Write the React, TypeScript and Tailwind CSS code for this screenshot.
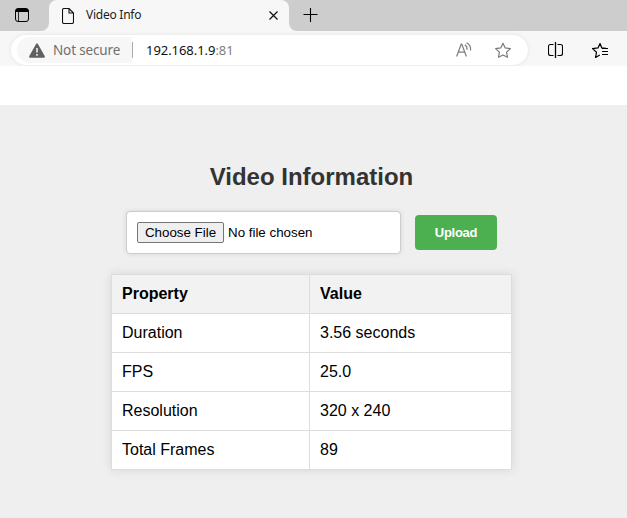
import React from "react";

const rows = [
  ["Duration", "3.56 seconds"],
  ["FPS", "25.0"],
  ["Resolution", "320 x 240"],
  ["Total Frames", "89"],
];

function TabStrip() {
  return (
    <div className="flex h-[31px] bg-[#f7f7f7]">
      <div className="h-[31px] w-[49px] rounded-br-lg bg-[#cdcdcd] pt-[8px] pl-[15px]">
        <svg width="14" height="14" viewBox="0 0 14 14" fill="none" stroke="#000">
          <rect x=".5" y=".5" width="13" height="13" rx="2.5" />
          <path d="M1 1h12v3H1z" fill="#000" stroke="none" />
          <path d="M3.500 4v9" strokeWidth=".8" />
        </svg>
      </div>
      <div className="h-[31px] w-[240px] bg-linear-to-b from-[#cdcdcd] from-50% to-[#f7f7f7] to-50%">
        <div className="flex h-[31px] items-center rounded-t-lg bg-[#f7f7f7] pl-[13px]">
          <svg width="12" height="16" viewBox="0 0 12 16" fill="none" stroke="#111" strokeWidth="1.100">
            <path d="M2 .500h5L11.500 5v9q0 1.500-1.500 1.500H2Q.500 15.500.500 14V2Q.500.500 2 .500zM7 .500V5h4.500" />
          </svg>
          <span className="ml-[12px] w-[183px] pb-[1px] text-[12px] text-[#1b1b1b]">
            <span className="tracking-[-0.25px]">Video Info</span>
          </span>
          <svg width="9" height="9" viewBox="0 0 9 9" stroke="#111" strokeWidth="1.200">
            <path d="M.5 .5l8 8M8.500 .5l-8 8" />
          </svg>
        </div>
      </div>
      <div className="h-[31px] flex-1 rounded-bl-lg bg-[#cdcdcd] pt-[8px] pl-[14px]">
        <svg width="15" height="14" viewBox="0 0 15 14" stroke="#000" strokeWidth="1.100">
          <path d="M.500 6.500h14M7.500 0v14" />
        </svg>
      </div>
    </div>
  );
}

function AddressBar() {
  return (
    <div className="flex h-[35px] overflow-hidden bg-[#f7f7f7] pt-[4px] pl-[11px]">
      <div className="flex h-[30px] w-[517px] items-center rounded-full bg-white pl-[6px] shadow-[0_0_4px_rgba(0,0,0,0.09)]">
        <div className="flex h-[26px] w-[115px] items-center rounded-l-full rounded-r-[10px] bg-[#f7f7f7] pl-[12px]">
          <svg width="16" height="15" viewBox="0 0 16 15">
            <path d="M7.100.900q.900-1.400 1.800 0l6.800 12q.700 1.600-1 1.900H1.300q-1.700-.300-1-1.900z" fill="#606060" />
            <path d="M8 5v4.500M8 11v1.700" stroke="#f7f7f7" strokeWidth="1.500" />
          </svg>
          <span className="ml-[8px] text-[13.500px] tracking-[-0.150px] whitespace-nowrap text-[#707070]">Not secure</span>
        </div>
        <div className="h-[16px] w-px bg-[#aaa]" />
        <div className="ml-[13px] w-[309px] pt-[1px] text-[13px] tracking-[-0.050px] whitespace-nowrap text-[#111]">
          192.168.1.9<span className="text-[#808080]">:81</span>
        </div>
        <svg className="mb-[1px]" width="17" height="15" viewBox="0 0 17 15" fill="none" stroke="#7d7d7d" strokeWidth="1.200">
          <path d="M1.600 14.500L6.200 2.200h.600L11.400 14.500M3.200 10.200h6.600" />
          <path d="M9.800 2.800q2.500 1.700 2.200 5M11.500 .700q4.800 2.600 4 7.800" />
        </svg>
        <svg className="ml-[22px]" width="18" height="17" viewBox="0 0 18 17" fill="none" stroke="#7a7a7a" strokeLinejoin="round" strokeWidth="1.200">
          <path d="M9 1.200l2.200 4.700 5.200.700-3.800 3.500.900 5.200L9 13l-4.500 2.300.900-5.200L1.600 6.600l5.200-.700z" />
        </svg>
      </div>
      <div className="flex h-[30px] items-center">
        <svg className="ml-[20px]" width="15" height="16" viewBox="0 0 15 16" fill="none" stroke="#000" strokeWidth="1.100">
          <path d="M5.500 2.500h-3q-2 0-2 2v7q0 2 2 2h3M9.500 2.500h3q2 0 2 2v7q0 2-2 2h-3" />
          <path d="M7.500 0v16" strokeWidth="1.300" />
        </svg>
        <svg className="ml-[28px]" width="18" height="17" viewBox="0 0 18 17" fill="none" stroke="#000" strokeLinejoin="round" strokeWidth="1.200">
          <path d="M14.800 6.300L10.800 5.900 9 1.500 7 5.900l-5.500.700 4 3.700-1 5.200L8.800 13" />
          <path d="M11 6.500h6M11 9.500h6M11 12.500h6" />
        </svg>
      </div>
    </div>
  );
}

export default function App() {
  return (
    <div className="h-[518px] w-[627px] overflow-hidden bg-white">
      <header className="h-[105px] font-['Noto_Sans','Open_Sans',sans-serif]">
        <TabStrip />
        <AddressBar />
      </header>
      <main className="flex h-[413px] flex-col bg-[#efefef] pt-[58px] font-['Liberation_Sans',Arial,sans-serif] text-black">
        <h1 className="ml-[111px] w-[401px] text-center text-[24px] leading-[28px] font-bold text-[#333]">Video Information</h1>
        <form className="mt-[20px] ml-[126px] flex items-center">
          <div className="flex h-[43px] w-[275px] items-center rounded border border-[#ccc] bg-white pl-[10px] text-[13.333px] shadow-[0_0_5px_rgba(0,0,0,0.1)]">
            <button type="button" className="h-[21px] w-[87px] rounded-[2px] border border-[#767676] bg-[#efefef] text-center leading-[19px] whitespace-nowrap">Choose File</button>
            <span className="ml-[4px]">No file chosen</span>
          </div>
          <button type="button" className="ml-[14px] h-[35px] w-[82px] rounded bg-[#4caf50] text-[13px] font-bold tracking-[-0.300px] text-white">Upload</button>
        </form>
        <table className="mt-[20px] ml-[111px] w-[401px] table-fixed border-collapse bg-white text-left text-[16px] leading-[18px] shadow-[0_0_10px_rgba(0,0,0,0.1)]">
          <thead>
            <tr className="h-[39px] bg-[#f2f2f2]">
              <th className="w-[198px] border border-[#ddd] px-[10px] font-bold">Property</th>
              <th className="border border-[#ddd] px-[10px] font-bold">Value</th>
            </tr>
          </thead>
          <tbody>
            {rows.map(([property, value]) => (
              <tr key={property} className="h-[39px]">
                <td className="border border-[#ddd] px-[10px]">{property}</td>
                <td className="border border-[#ddd] px-[10px]">{value}</td>
              </tr>
            ))}
          </tbody>
        </table>
      </main>
    </div>
  );
}
